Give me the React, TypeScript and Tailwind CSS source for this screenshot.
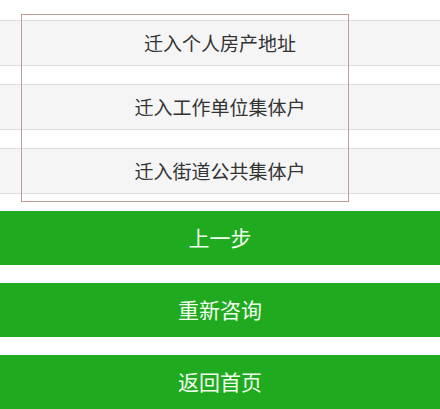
export default function App() {
    const options = ["迁入个人房产地址", "迁入工作单位集体户", "迁入街道公共集体户"]
    const actions = ["上一步", "重新咨询", "返回首页"]

    return (
        <div
            className="relative w-[440px] h-[409px] overflow-hidden bg-white"
            style={{ fontFamily: '"Noto Sans CJK SC", "Noto Sans", sans-serif' }}
        >
            {/* Option rows */}
            <div className="pt-5 flex flex-col gap-[18px]">
                {options.map((label) => (
                    <div
                        key={label}
                        className="h-[46px] bg-[#f5f5f5] border-y border-[#dedede] flex items-center justify-center text-[19px] text-[#333]"
                    >
                        {label}
                    </div>
                ))}
            </div>

            {/* Annotation box over the options */}
            <div className="absolute left-[21px] top-[14px] w-[328px] h-[188px] border border-[#c39a98] pointer-events-none" />

            {/* Action buttons */}
            <div className="mt-[17px] flex flex-col gap-[18px]">
                {actions.map((label) => (
                    <button
                        key={label}
                        className="h-[54px] w-full bg-[#1faa1f] text-[#f3fff0] text-[21px] flex items-center justify-center"
                    >
                        {label}
                    </button>
                ))}
            </div>
        </div>
    )
}
